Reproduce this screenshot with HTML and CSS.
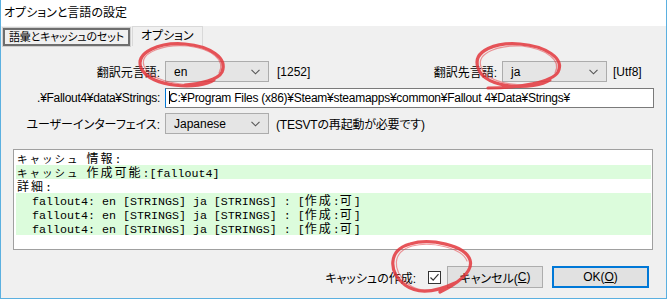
FILE: index.html
```html
<!DOCTYPE html>
<html lang="ja">
<head>
<meta charset="utf-8">
<title>オプションと言語の設定</title>
<link rel="stylesheet" href="styles.css">
</head>
<body>
<div class="win">
  <div class="title">オプションと言語の設定</div>
  <div class="tabs">
    <div class="tab sel">語彙とキャッシュのセット</div>
    <div class="tab">オプション</div>
  </div>
  <div class="panel">
    <div class="row r1">
      <div class="lbl">翻訳元言語:</div>
      <div class="combo c1"><span>en</span><svg class="chev" width="9" height="6" viewBox="0 0 9 6"><path d="M0.5 0.8 L4.5 4.8 L8.5 0.8" fill="none" stroke="#555" stroke-width="1.1"/></svg></div>
      <div class="cp">[1252]</div>
      <div class="lbl lbl2">翻訳先言語:</div>
      <div class="combo c2"><span>ja</span><svg class="chev" width="9" height="6" viewBox="0 0 9 6"><path d="M0.5 0.8 L4.5 4.8 L8.5 0.8" fill="none" stroke="#555" stroke-width="1.1"/></svg></div>
      <div class="cp2">[Utf8]</div>
    </div>
    <div class="row r2">
      <div class="lbl tight">.¥Fallout4¥data¥Strings:</div>
      <div class="input"><span class="caret"></span>C:¥Program Files (x86)¥Steam¥steamapps¥common¥Fallout 4¥Data¥Strings¥</div>
    </div>
    <div class="row r3">
      <div class="lbl">ユーザーインターフェイス:</div>
      <div class="combo c3"><span>Japanese</span><svg class="chev" width="9" height="6" viewBox="0 0 9 6"><path d="M0.5 0.8 L4.5 4.8 L8.5 0.8" fill="none" stroke="#555" stroke-width="1.1"/></svg></div>
      <div class="note">(TESVTの再起動が必要です)</div>
    </div>
    <div class="log">
      <div class="ln"><span class="kana">キャッシュ</span> <span class="cj">情報</span>:</div>
      <div class="ln hl"><span class="kana">キャッシュ</span> <span class="cj">作成可能</span>:[fallout4]</div>
      <div class="ln"><span class="cj">詳細</span>:</div>
      <div class="blk">
        <div class="ln ind">fallout4: en [STRINGS] ja [STRINGS] : [<span class="cj">作成</span>:<span class="cj">可</span>]</div>
        <div class="ln ind">fallout4: en [STRINGS] ja [STRINGS] : [<span class="cj">作成</span>:<span class="cj">可</span>]</div>
        <div class="ln ind">fallout4: en [STRINGS] ja [STRINGS] : [<span class="cj">作成</span>:<span class="cj">可</span>]</div>
      </div>
    </div>
    <div class="bottom">
      <div class="blbl">キャッシュの作成:</div>
      <div class="check"><svg width="11" height="11" viewBox="0 0 11 11"><path d="M1.5 5.5 L4.2 8.2 L9.5 2.2" fill="none" stroke="#333" stroke-width="1.2"/></svg></div>
      <div class="btn cancel">キャンセル(<u>C</u>)</div>
      <div class="btn ok">OK(<u>O</u>)</div>
    </div>
  </div>
  <svg class="marks" width="667" height="299" viewBox="0 0 667 299">
    <g fill="none" stroke="#e3363c" stroke-linecap="round" opacity="0.85">
      <path d="M214 80 C200 90 150 88 141 68 C135 52 160 42 185 44 C210 46 228 58 222 72 C218 80 200 84 185 85" stroke-width="3.2"/>
      <path d="M210 82 C195 88 152 84 144 66 C139 52 165 44 188 46 C212 49 226 60 219 73" stroke-width="1.2" opacity="0.6"/>
      <path d="M550 80 C535 90 485 90 478 68 C472 50 497 42 520 44 C545 46 565 58 558 72 C552 82 520 88 488 88" stroke-width="3.2"/>
      <path d="M546 82 C530 88 488 86 481 67 C476 52 500 45 522 46 C546 49 562 60 555 73" stroke-width="1.2" opacity="0.6"/>
      <path d="M455 283 C440 290 420 296 405 285 C388 272 388 250 410 244 C430 238 465 245 470 260 C474 272 455 285 440 292" stroke-width="3.2"/>
      <path d="M452 285 C436 292 418 293 407 283 C392 270 392 252 412 246 C432 241 462 248 467 261" stroke-width="1.2" opacity="0.6"/>
    </g>
  </svg>
</div>
</body>
</html>
```

FILE: styles.css
```css
* { box-sizing: border-box; }
html, body { margin: 0; padding: 0; }
body {
  width: 667px;
  height: 299px;
  overflow: hidden;
  background: #ffffff;
  font-family: "Liberation Sans", "Noto Sans CJK JP", sans-serif;
  font-size: 12px;
  color: #000;
  font-feature-settings: "palt";
}
.win {
  position: relative;
  width: 667px;
  height: 299px;
  border-left: 1px solid #5bb0e0;
  border-right: 1px solid #5bb0e0;
  border-bottom: 1px solid #5bb0e0;
  background: #f0f0f0;
  display: flex;
  flex-direction: column;
}
.title {
  height: 26px;
  background: #fff;
  padding-left: 3px;
  line-height: 26px;
  font-size: 12px;
}
.tabs {
  height: 20px;
  display: flex;
  align-items: flex-end;
  padding-left: 2px;
}
.tab {
  height: 20px;
  padding: 0 8px;
  line-height: 18px;
  border: 1px solid #d9d9d9;
  border-bottom: none;
  background: #f0f0f0;
  margin-left: 2px;
  white-space: nowrap;
}
.tab.sel {
  height: 18px;
  padding: 0 4px;
  margin-left: 0;
  line-height: 14px;
  font-size: 11px;
  letter-spacing: -0.2px;
  border: 2px solid #6e6e6e;
  outline: 1px solid #d0d0d0;
}
.panel { flex: 1; display: flex; flex-direction: column; }
.row { display: flex; align-items: center; }
.lbl { width: 159px; text-align: right; white-space: nowrap; }
.tight { letter-spacing: -0.3px; }
.r1 { margin-top: 15px; height: 21px; }
.r2 { margin-top: 6px; height: 20px; }
.r3 { margin-top: 5px; height: 21px; }
.combo {
  height: 21px;
  margin-left: 5px;
  background: #e5e5e5;
  border: 1px solid #acacac;
  display: flex;
  align-items: center;
  justify-content: space-between;
  padding: 0 8px 0 8px;
}
.chev { display: block; }
.c1 { width: 104px; }
.c2 { width: 105px; }
.c3 { width: 104px; }
.cp { width: 54px; margin-left: 8px; }
.lbl2 { width: 166px; }
.cp2 { margin-left: 6px; }
.note { margin-left: 7px; white-space: nowrap; letter-spacing: -0.2px; }
.input {
  position: relative;
  margin-left: 5px;
  width: 489px;
  height: 20px;
  background: #fff;
  border: 1px solid #7a7a7a;
  border-left-color: #0078d7;
  padding-left: 3px;
  line-height: 18px;
  white-space: nowrap;
  overflow: hidden;
  letter-spacing: -0.26px;
}
.input::after {
  content: "";
  position: absolute;
  left: 0;
  bottom: -1px;
  width: 347px;
  height: 1px;
  background: #0078d7;
}
.caret {
  display: inline-block;
  width: 1px;
  height: 13px;
  background: #000;
  vertical-align: -2px;
  margin-right: -1px;
}
.log {
  margin: 15px 0 0 12px;
  width: 640px;
  height: 101px;
  background: #fff;
  border: 1px solid #a0a0a0;
  padding: 1px 1px 0 2px;
  font-family: "Liberation Mono", "Noto Sans CJK JP", monospace;
  font-size: 11.67px;
  font-feature-settings: normal;
}
.ln {
  height: 14px;
  line-height: 14px;
  padding-left: 1px;
  white-space: pre;
}
.hl, .blk { background: #dcfcdc; }
.ind { padding-left: 16px; }
.cj {
  font-family: "Noto Sans CJK JP", sans-serif;
  font-size: 12px;
  letter-spacing: 2px;
}
.kana {
  font-family: "Noto Sans CJK JP", sans-serif;
  font-size: 10.5px;
  letter-spacing: 2px;
}
.bottom {
  margin-top: 16px;
  height: 22px;
  display: flex;
  align-items: center;
  justify-content: flex-end;
  padding-right: 17px;
}
.blbl { white-space: nowrap; }
.check {
  margin-left: 12px;
  width: 13px;
  height: 13px;
  border: 1px solid #333;
  background: #fff;
  display: flex;
  align-items: center;
  justify-content: center;
}
.btn {
  height: 22px;
  background: #e1e1e1;
  border: 1px solid #adadad;
  display: flex;
  align-items: center;
  justify-content: center;
}
.cancel { width: 96px; margin-left: 6px; }
.ok { width: 97px; margin-left: 9px; border: 2px solid #0078d7; }
.marks {
  position: absolute;
  left: -1px;
  top: 0;
  pointer-events: none;
}
```
